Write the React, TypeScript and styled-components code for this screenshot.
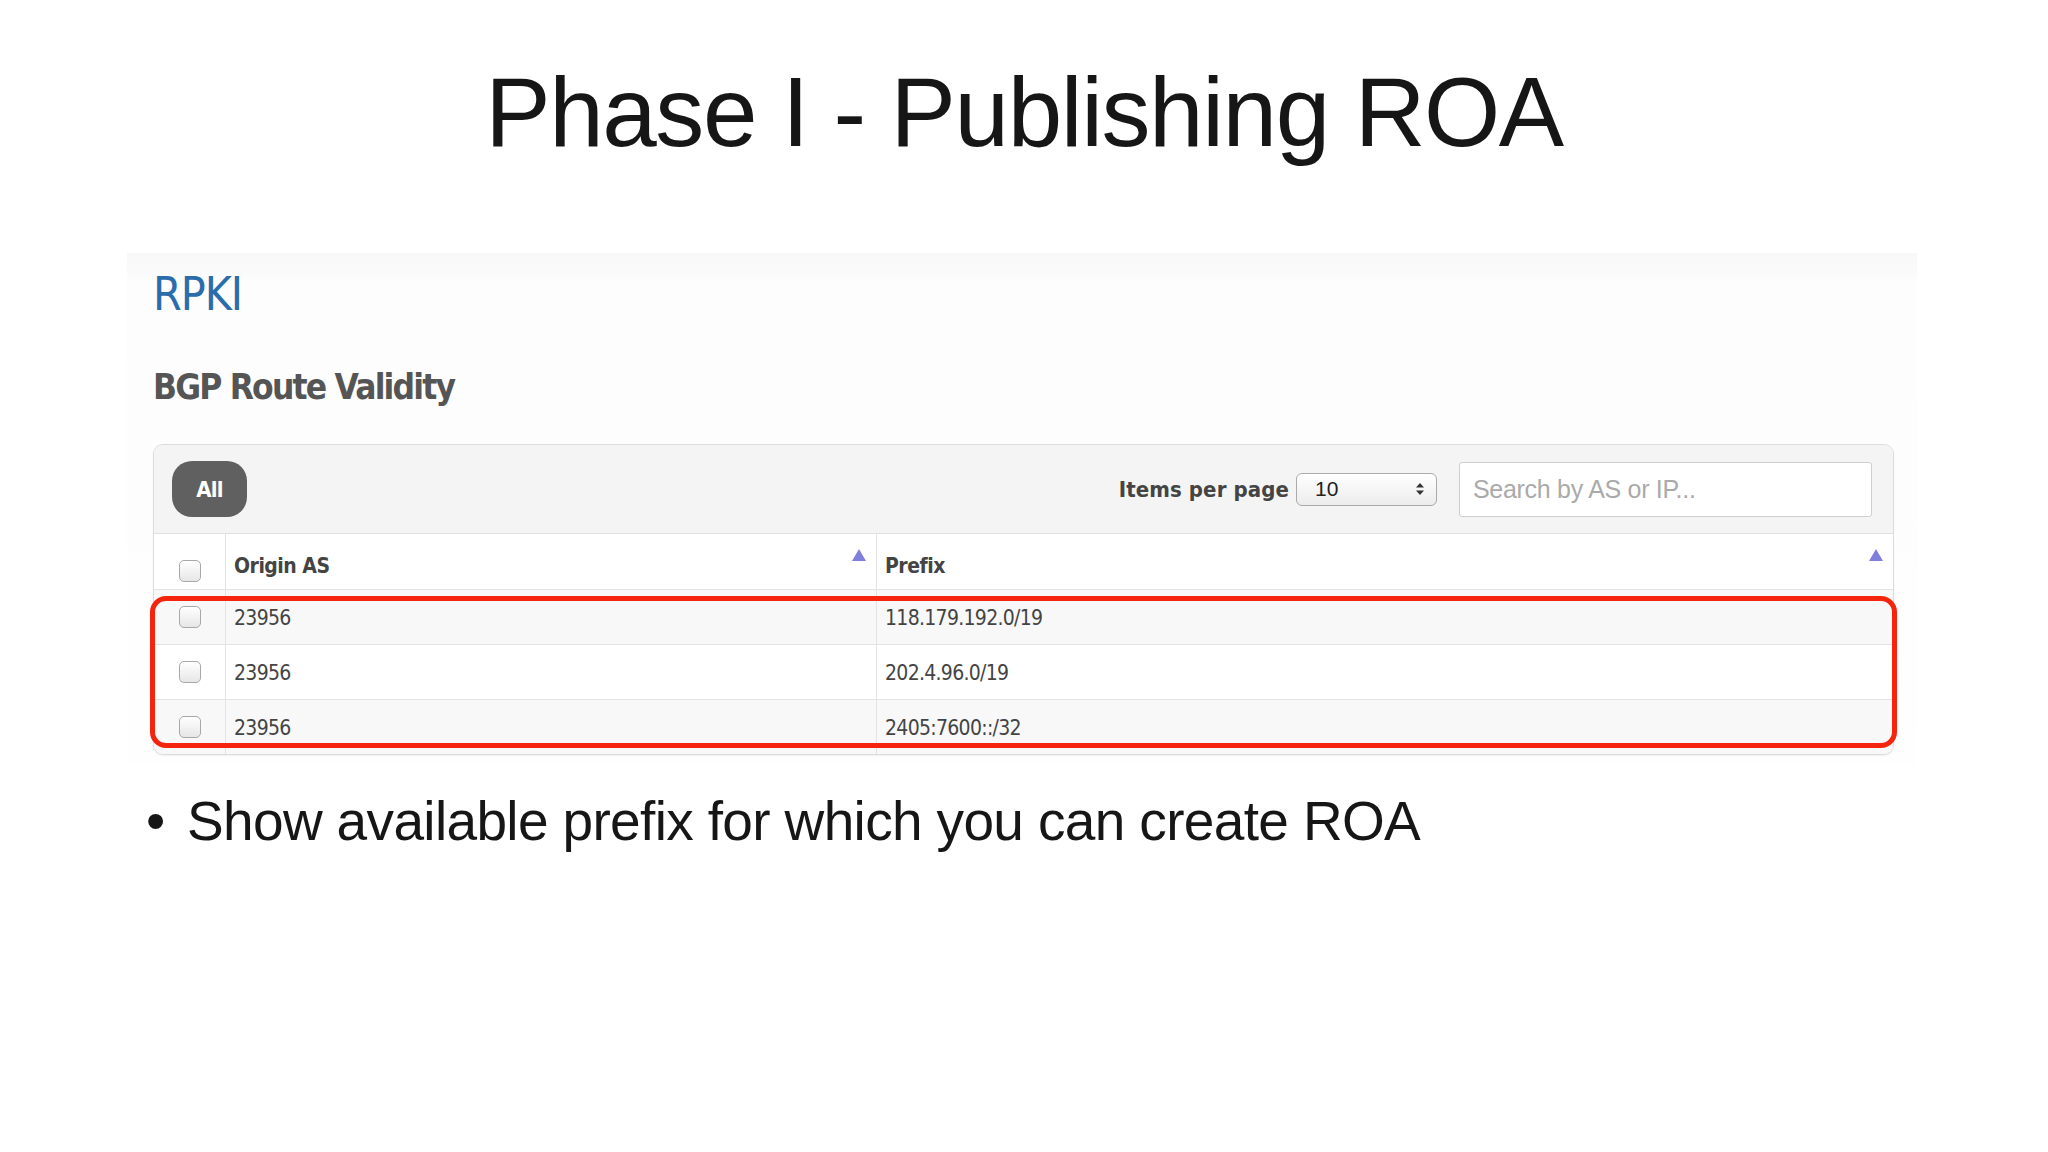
import styled, { createGlobalStyle } from "styled-components";

const GlobalStyle = createGlobalStyle`
  html, body {
    margin: 0;
    padding: 0;
    background: #ffffff;
  }
`;

const Page = styled.div`
  width: 2048px;
  height: 1152px;
  padding-top: 63px;
  box-sizing: border-box;
  background: #ffffff;
  font-family: "Liberation Sans", Arial, sans-serif;
  color: #000;
`;

const SlideTitle = styled.h1`
  margin: 0;
  font-size: 98px;
  line-height: 98px;
  font-weight: 400;
  letter-spacing: -1.4px;
  text-align: center;
  color: #161616;
`;

const Shot = styled.div`
  margin: 92px 0 0 127px;
  width: 1790px;
  padding: 18px 23px 10px 26px;
  box-sizing: border-box;
  background: linear-gradient(
    to bottom,
    #f8f8f8 0px,
    #fafafa 18px,
    #fdfdfd 30px,
    #fefefe 100%
  );
  font-family: "DejaVu Sans Condensed", "DejaVu Sans", sans-serif;
`;

const Brand = styled.div`
  font-size: 46px;
  line-height: 46px;
  color: #2b6cab;
  letter-spacing: -1px;
`;

const SectionTitle = styled.div`
  margin-top: 53px;
  font-size: 35px;
  line-height: 35px;
  font-weight: 700;
  color: #555;
  letter-spacing: -1.8px;
`;

const Table = styled.div`
  position: relative;
  margin-top: 39px;
  border: 1px solid #dcdcdc;
  border-radius: 10px;
  background: #fff;
  box-shadow: 0 1px 2px rgba(0, 0, 0, 0.06);
`;

const Toolbar = styled.div`
  height: 88px;
  display: flex;
  align-items: center;
  padding: 0 21px 0 18px;
  background: #f4f4f4;
  border-bottom: 1px solid #e0e0e0;
  border-radius: 10px 10px 0 0;
`;

const PillButton = styled.div`
  width: 75px;
  height: 56px;
  border-radius: 20px;
  background: #606060;
  color: #fff;
  font-size: 22px;
  font-weight: 700;
  letter-spacing: -0.8px;
  display: flex;
  align-items: center;
  justify-content: center;
`;

const Spacer = styled.div`
  flex: 1;
`;

const PerPageLabel = styled.span`
  font-size: 22px;
  font-weight: 700;
  color: #444;
  letter-spacing: 0.1px;
  margin-right: 7px;
`;

const Select = styled.div`
  width: 141px;
  height: 33px;
  box-sizing: border-box;
  border: 1px solid #aaa;
  border-radius: 6px;
  background: linear-gradient(to bottom, #ffffff, #ececec);
  display: flex;
  align-items: center;
  justify-content: space-between;
  padding: 0 12px 0 18px;
  font-family: "Liberation Sans", Arial, sans-serif;
  font-size: 21px;
  color: #222;
`;

const SearchBox = styled.div`
  width: 413px;
  height: 55px;
  box-sizing: border-box;
  margin-left: 22px;
  border: 1px solid #cfcfcf;
  border-radius: 3px;
  background: #fff;
  display: flex;
  align-items: center;
  padding-left: 13px;
  font-family: "Liberation Sans", Arial, sans-serif;
  font-size: 25px;
  color: #aaa;
  letter-spacing: -0.3px;
`;

const Row = styled.div<{ $head?: boolean; $shade?: boolean; $last?: boolean }>`
  display: grid;
  grid-template-columns: 71px 651px 1fr;
  height: ${(p) => (p.$head ? 55 : 54)}px;
  background: ${(p) => (p.$shade ? "#f8f8f8" : "#ffffff")};
  border-bottom: ${(p) => (p.$last ? "none" : "1px solid #e3e3e3")};
  border-radius: ${(p) => (p.$last ? "0 0 10px 10px" : "0")};
  font-size: 21px;
  color: #444;
`;

const CheckCell = styled.div<{ $head?: boolean }>`
  display: flex;
  justify-content: center;
  align-items: ${(p) => (p.$head ? "flex-start" : "center")};
  padding-top: ${(p) => (p.$head ? "26px" : "0")};
`;

const Cell = styled.div<{ $head?: boolean }>`
  display: flex;
  align-items: center;
  justify-content: space-between;
  border-left: 1px solid #e3e3e3;
  padding: ${(p) => (p.$head ? "8px 10px 0 8px" : "2px 10px 0 8px")};
  font-weight: ${(p) => (p.$head ? 700 : 400)};
  letter-spacing: ${(p) => (p.$head ? "-0.5px" : "-0.7px")};
`;

const SortArrow = styled.span`
  align-self: flex-start;
  margin-top: 7px;
  width: 0;
  height: 0;
  border-left: 7px solid transparent;
  border-right: 7px solid transparent;
  border-bottom: 12px solid #7f7fe0;
`;

const Box = styled.span`
  width: 22px;
  height: 22px;
  box-sizing: border-box;
  border: 1px solid #a8a8a8;
  border-radius: 5px;
  background: linear-gradient(to bottom, #ffffff, #e6e6e6);
`;

const Body = styled.div`
  position: relative;
`;

const Highlight = styled.div`
  position: absolute;
  top: 6px;
  bottom: 6px;
  left: -4px;
  right: -4px;
  border: 5px solid #f5240d;
  border-radius: 16px;
  pointer-events: none;
`;

const Bullets = styled.ul`
  list-style: none;
  margin: 29px 0 0 146px;
  padding: 0;
`;

const BulletItem = styled.li`
  display: flex;
  font-size: 55px;
  line-height: 55px;
  letter-spacing: -0.65px;
  color: #161616;
`;

const Dot = styled.span`
  width: 41px;
  flex: none;
`;

const rows = [
  { as: "23956", prefix: "118.179.192.0/19" },
  { as: "23956", prefix: "202.4.96.0/19" },
  { as: "23956", prefix: "2405:7600::/32" },
];

const UpDown = () => (
  <svg width="8" height="12" viewBox="0 0 8 12">
    <path d="M4 0 L8 4.5 L0 4.5 Z" fill="#333" />
    <path d="M4 12 L8 7.5 L0 7.5 Z" fill="#333" />
  </svg>
);

const App = () => {
  return (
    <Page>
      <GlobalStyle />
      <SlideTitle>Phase I - Publishing ROA</SlideTitle>

      <Shot>
        <Brand>RPKI</Brand>
        <SectionTitle>BGP Route Validity</SectionTitle>

        <Table>
          <Toolbar>
            <PillButton>All</PillButton>
            <Spacer />
            <PerPageLabel>Items per page</PerPageLabel>
            <Select>
              <span>10</span>
              <UpDown />
            </Select>
            <SearchBox>Search by AS or IP...</SearchBox>
          </Toolbar>

          <Row $head>
            <CheckCell $head>
              <Box />
            </CheckCell>
            <Cell $head>
              <span>Origin AS</span>
              <SortArrow />
            </Cell>
            <Cell $head>
              <span>Prefix</span>
              <SortArrow />
            </Cell>
          </Row>

          <Body>
            {rows.map((r, i) => (
              <Row key={r.prefix} $shade={i % 2 === 0} $last={i === rows.length - 1}>
                <CheckCell>
                  <Box />
                </CheckCell>
                <Cell>{r.as}</Cell>
                <Cell>{r.prefix}</Cell>
              </Row>
            ))}
            <Highlight />
          </Body>
        </Table>
      </Shot>

      <Bullets>
        <BulletItem>
          <Dot>•</Dot>
          <span>Show available prefix for which you can create ROA</span>
        </BulletItem>
      </Bullets>
    </Page>
  );
};

export default App;
